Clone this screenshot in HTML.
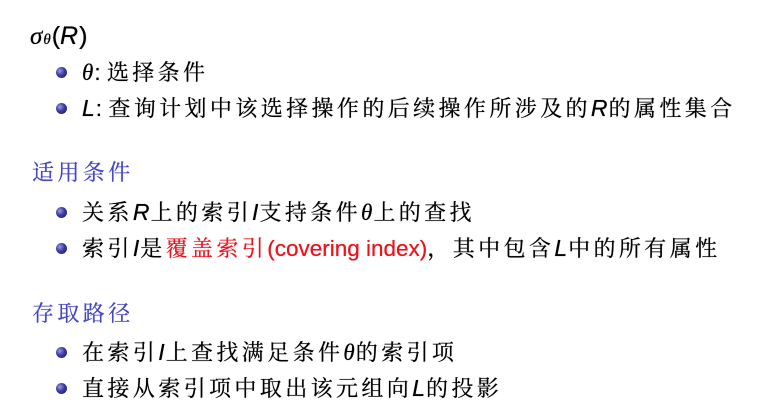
<!DOCTYPE html>
<html><head><meta charset="utf-8"><style>
html,body{margin:0;padding:0;background:#fff;}
body{width:774px;height:407px;position:relative;overflow:hidden;color:#000;}
.l{position:absolute;white-space:nowrap;font-size:22px;letter-spacing:3.4px;line-height:28px;font-family:"Noto Serif CJK SC","Noto Sans CJK SC",serif;text-shadow:0 0 0.6px #000;}
.m{font-family:"Liberation Sans",sans-serif;font-style:italic;letter-spacing:1px;font-size:23px;}
.g{font-family:"Liberation Serif",serif;font-style:italic;letter-spacing:1px;font-size:23px;}
.s{font-family:"Liberation Sans",sans-serif;letter-spacing:0;font-size:22.5px;}
.b{position:absolute;width:11px;height:11px;border-radius:50%;background:radial-gradient(circle at 35% 35%,#9a9ae0 0%,#3a3aa0 45%,#1a1a5a 100%);}
.h{color:#4646c0;text-shadow:0 0 0.6px #4646c0;}
.r{color:#e8141e;text-shadow:0 0 0.6px #e8141e;}
</style></head><body>
<div class="l" style="left:30px;top:20px;font-size:24px;"><span class="g" style="font-size:25px">σ</span><span class="g" style="font-size:15px">θ</span><span class="s" style="font-size:25px">(</span><span class="m" style="font-size:25px">R</span><span class="s" style="font-size:25px">)</span></div>

<div class="b" style="left:56px;top:67px"></div>
<div class="l" style="left:82px;top:58px"><span class="g">θ</span><span class="s">: </span> 选择条件</div>
<div class="b" style="left:56px;top:103px"></div>
<div class="l" style="left:82px;top:94px"><span class="m">L</span><span class="s">: </span> 查询计划中该选择操作的后续操作所涉及的<span class="m">R</span>的属性集合</div>

<div class="l h" style="left:32px;top:158px">适用条件</div>
<div class="b" style="left:56px;top:207px"></div>
<div class="l" style="left:82px;top:198px">关系<span class="m">R</span>上的索引<span class="m">I</span>支持条件<span class="g">θ</span>上的查找</div>
<div class="b" style="left:56px;top:243px"></div>
<div class="l" style="left:82px;top:234px">索引<span class="m">I</span>是<span class="r">覆盖索引<span class="s">(covering index)</span></span>，其中包含<span class="m">L</span>中的所有属性</div>

<div class="l h" style="left:32px;top:299px">存取路径</div>
<div class="b" style="left:56px;top:347px"></div>
<div class="l" style="left:82px;top:338px">在索引<span class="m">I</span>上查找满足条件<span class="g">θ</span>的索引项</div>
<div class="b" style="left:56px;top:383px"></div>
<div class="l" style="left:82px;top:374px">直接从索引项中取出该元组向<span class="m">L</span>的投影</div>
</body></html>
